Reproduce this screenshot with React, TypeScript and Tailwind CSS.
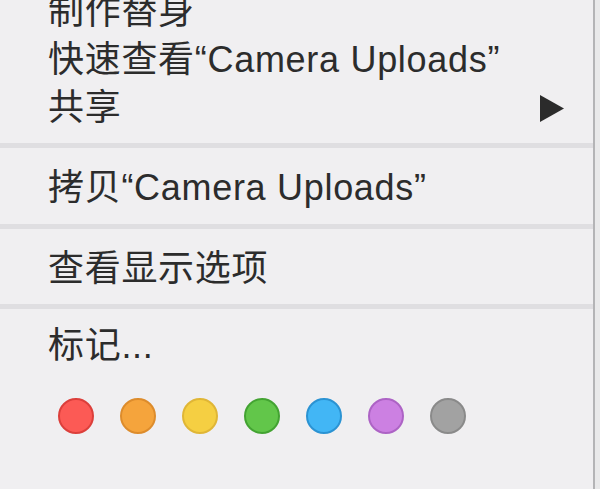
const fontStack = "font-['Liberation_Sans','Noto_Sans_CJK_SC',sans-serif]";

const tagColors = [
  { fill: "bg-[#fc5a55]", ring: "border-[#dc3f3b]" },
  { fill: "bg-[#f5a43c]", ring: "border-[#dd8c2c]" },
  { fill: "bg-[#f5cf42]", ring: "border-[#e0b636]" },
  { fill: "bg-[#62c64a]", ring: "border-[#43a332]" },
  { fill: "bg-[#42b6f5]", ring: "border-[#2b93d3]" },
  { fill: "bg-[#cc80e2]", ring: "border-[#ad63c5]" },
  { fill: "bg-[#a2a2a2]", ring: "border-[#8a8a8a]" },
];

function Row({ label, submenu }: { label: string; submenu?: boolean }) {
  return (
    <div className="flex h-[48px] items-center justify-between pl-[48px] pr-[29px] pt-[4px]">
      <span className="whitespace-nowrap tracking-[0.7px]">{label}</span>
      {submenu && (
        <svg width="24" height="27" viewBox="0 0 24 27">
          <polygon points="0,0 24,13.5 0,27" fill="#2b2b2b" />
        </svg>
      )}
    </div>
  );
}

function Separator() {
  return <div className="h-[5px] bg-[#dfdee1]" />;
}

export default function App() {
  return (
    <div className="flex h-[489px] w-[600px] overflow-hidden bg-[#e9e9ea]">
      <div
        className={`${fontStack} w-[595px] shrink-0 border-r-2 border-[#b4b4b6] bg-[#f0eff1] text-[36px] leading-none text-[#2c2c2c]`}
      >
        <div className="-mt-[14px] pb-[13px]">
          <Row label="制作替身" />
          <Row label="快速查看“Camera Uploads”" />
          <Row label="共享" submenu />
        </div>
        <Separator />
        <div className="py-[14px]">
          <Row label="拷贝“Camera Uploads”" />
        </div>
        <Separator />
        <div className="pt-[14px] pb-[13px]">
          <Row label="查看显示选项" />
        </div>
        <Separator />
        <div className="pt-[11px]">
          <Row label="标记..." />
          <div className="mt-[30px] flex gap-[26px] pl-[58px]">
            {tagColors.map((c, i) => (
              <div
                key={i}
                className={`h-[36px] w-[36px] rounded-full border-2 ${c.fill} ${c.ring}`}
              />
            ))}
          </div>
        </div>
      </div>
    </div>
  );
}
